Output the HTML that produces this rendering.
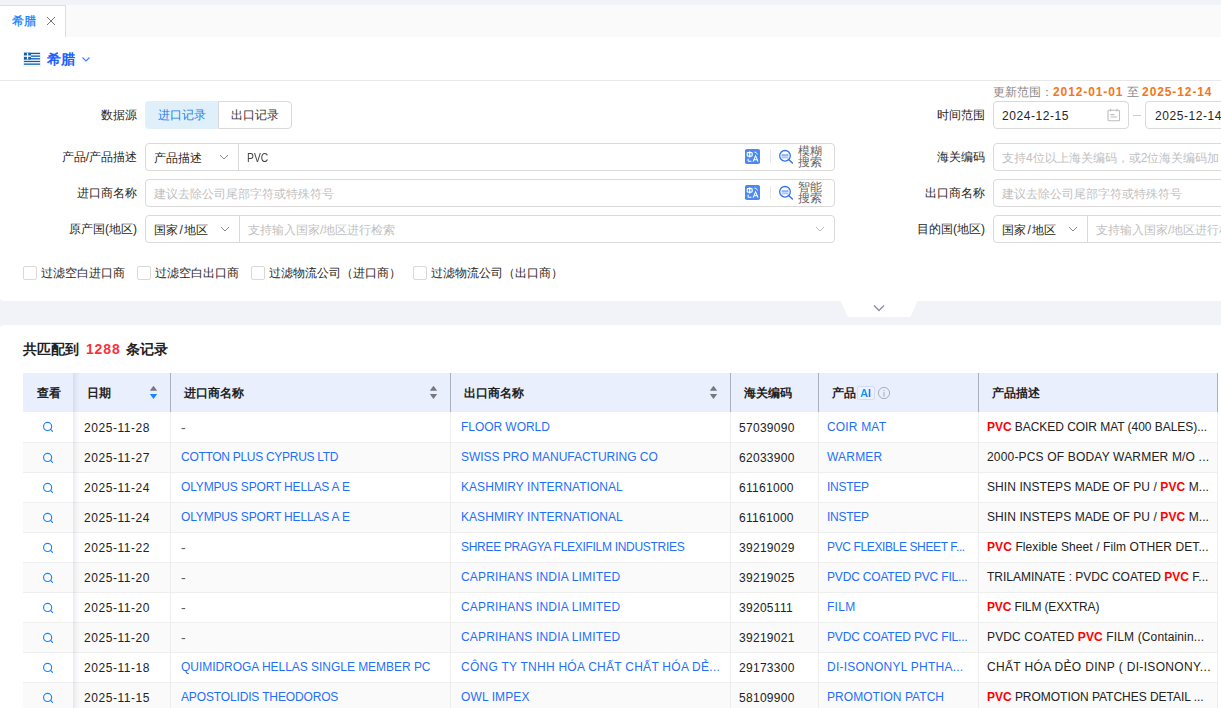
<!DOCTYPE html>
<html><head><meta charset="utf-8">
<style>
*{box-sizing:border-box;margin:0;padding:0}
html,body{width:1221px;height:708px;overflow:hidden;background:#f1f3f8;font-family:"Liberation Sans",sans-serif;font-size:12px;color:#333}
.a{position:absolute;white-space:nowrap}
#tabbar{position:absolute;left:0;top:5px;width:1221px;height:32px;background:#fafafa}
#tab{position:absolute;left:0;top:0;width:66px;height:32px;background:#fff;border-top:1px solid #dedede;border-right:1px solid #dedede}
#formcard{position:absolute;left:0;top:37px;width:1221px;height:264px;background:#fff;border-radius:0 0 0 4px}
.lbl{position:absolute;text-align:right;font-size:12px;color:#262626;line-height:28px;height:28px;white-space:nowrap}
.inp{position:absolute;border:1px solid #d9d9d9;border-radius:4px;height:28px;background:#fff;overflow:hidden}
.ph{position:absolute;top:1px;line-height:26px;color:#bfbfbf;white-space:nowrap}
.tx{position:absolute;top:1px;line-height:26px;color:#262626;white-space:nowrap}
.sep{position:absolute;top:0;width:1px;height:26px;background:#d9d9d9}
.chev{position:absolute}
.cb{position:absolute;top:266px;width:14px;height:14px;border:1px solid #d9d9d9;border-radius:2px;background:#fff}
.cbt{position:absolute;top:266px;line-height:15px;color:#262626;white-space:nowrap}
#band{position:absolute;left:0;top:301px;width:1221px;height:24px;background:#f1f3f8}
#result{position:absolute;left:0;top:325px;width:1221px;height:383px;background:#fff;border-radius:4px 0 0 0}
table{position:absolute;left:23px;top:373px;border-collapse:collapse;table-layout:fixed;width:1194px}
th{height:39px;background:#e9effd;text-align:left;font-weight:bold;color:#222;font-size:12px;position:relative;padding:2px 0 0 14px;white-space:nowrap}
td{height:30px;border-bottom:1px solid #efefef;padding:2px 0 0 11px;white-space:nowrap;overflow:hidden;color:#222;position:relative}
td.c0{text-align:center;padding:3px 0 0 0}
tr.even td{background:#fafafa}
th.c0{text-align:center;padding:2px 0 0 2px}
.rh{position:absolute;right:0;top:0;width:1px;height:39px;background:#b8b8c0}
td .bl{position:absolute;right:0;top:0;width:1px;height:30px;background:#ececec}
.lk{color:#1f6ffa;position:relative;top:-1px}
td.c4,td.c5,td.c6{padding-left:9px}
.dt{letter-spacing:0.55px}
.cd{letter-spacing:0.29px}
.ds{position:relative;top:-1px}
.vl{position:absolute;width:1px}
.dash{color:#555;display:inline-block;transform:scaleX(1.2);transform-origin:0 0}
.r{color:#f00;font-weight:bold}
.sort{position:absolute;top:12px}
.shadow{position:absolute;left:73px;top:373px;width:7px;height:335px;background:linear-gradient(to right,rgba(30,30,90,0.09),rgba(30,30,90,0.035) 45%,rgba(30,30,90,0))}
</style></head><body>
<div id="tabbar"><div id="tab"></div>
 <div class="a" style="left:12px;top:8px;font-size:12px;color:#0f7bff;line-height:16px;-webkit-text-stroke:0.2px #0f7bff">希腊</div>
 <svg class="a" style="left:46px;top:11px" width="10" height="10" viewBox="0 0 10 10"><path d="M1 1L9 9M9 1L1 9" stroke="#707070" stroke-width="0.95"/></svg>
</div>
<div id="formcard">
 <div class="a" style="left:0;top:43px;width:1221px;height:1px;background:#e8e8e8"></div>
 <!-- flag -->
 <svg class="a" style="left:23px;top:15px" width="18" height="15" viewBox="0 0 18 15">
  <rect x="0.5" y="0.5" width="17" height="14" fill="#fff" stroke="#f0f0f0" stroke-width="1"/>
  <g transform="translate(1,0.8)">
  <rect x="0" y="0" width="16" height="1.33" fill="#0d5eaf"/>
  <rect x="0" y="2.67" width="16" height="1.33" fill="#0d5eaf"/>
  <rect x="0" y="5.33" width="16" height="1.33" fill="#0d5eaf"/>
  <rect x="0" y="8" width="16" height="1.33" fill="#0d5eaf"/>
  <rect x="0" y="10.67" width="16" height="1.33" fill="#0d5eaf"/>
  <rect x="0" y="0" width="7" height="6.67" fill="#0d5eaf"/>
  <rect x="2.9" y="0" width="1.3" height="6.67" fill="#fff"/>
  <rect x="0" y="2.67" width="7" height="1.33" fill="#fff"/>
  </g>
 </svg>
 <div class="a" style="left:47px;top:13px;font-size:14px;font-weight:bold;color:#1f5fff;line-height:18px">希腊</div>
 <svg class="a" style="left:81px;top:19px" width="10" height="7" viewBox="0 0 10 7"><path d="M1.5 1.5L5 5L8.5 1.5" fill="none" stroke="#3d7bff" stroke-width="1.1"/></svg>
</div>
<!-- form fields (page coords) -->
<div class="lbl" style="left:0;width:137px;top:101px">数据源</div>
<div class="a" style="left:145px;top:101px;width:73px;height:28px;background:#dff0fb;border-radius:4px 0 0 4px;color:#1f7cf0;text-align:center;line-height:28px">进口记录</div>
<div class="a" style="left:218px;top:101px;width:74px;height:28px;border:1px solid #d9d9d9;border-radius:0 4px 4px 0;background:#fff;text-align:center;line-height:26px;color:#333">出口记录</div>
<div class="lbl" style="left:0;width:137px;top:143px">产品/产品描述</div>
<div class="inp" style="left:145px;top:143px;width:690px">
 <div class="tx" style="left:8px">产品描述</div>
 <svg class="chev" style="left:73px;top:10px" width="10" height="6" viewBox="0 0 10 6"><path d="M1 1L5 5L9 1" fill="none" stroke="#8a8a8a" stroke-width="1"/></svg>
 <div class="sep" style="left:92px"></div>
 <div class="tx" style="left:101px;color:#444;transform:scaleX(0.86);transform-origin:0 0">PVC</div>
 <svg class="a" style="left:599px;top:5px" width="15" height="15" viewBox="0 0 15 15"><rect width="15" height="15" rx="1.8" fill="#4d8af0"/><g fill="none" stroke="#fff" stroke-width="1.1"><rect x="2.2" y="3.6" width="5" height="3.5" rx="0.8"/><path d="M4.7 2.3V8.5"/><path d="M9.4 3.1L11.1 3.4L12.5 5.5" stroke-width="0.9"/><path d="M3.1 9.7V11.4Q3.1 12.3 4 12.3H6.4"/><path d="M8.1 12.6L10.6 6.8L13.1 12.6M9 10.7H12.2"/></g></svg>
 <div class="sep" style="left:624px;top:6px;height:13px;background:#e6e6e6"></div>
 <svg class="a" style="left:632px;top:5px" width="16" height="16" viewBox="0 0 16 16"><path d="M3.6 5.3H9.2L10.4 4.2V7.6H3.6Z M3.6 8.2H10.4V9.8L9.2 9.2H3.6Z" fill="#8db1f3"/><circle cx="7" cy="6.8" r="5.3" fill="none" stroke="#2f74f0" stroke-width="1.3"/><path d="M10.9 10.7L14.4 14" stroke="#2f74f0" stroke-width="1.4" stroke-linecap="round"/></svg>
 <div class="a" style="left:652px;top:2px;font-size:12px;line-height:11px;color:#666">模糊<br>搜索</div>
</div>
<div class="lbl" style="left:0;width:137px;top:179px">进口商名称</div>
<div class="inp" style="left:145px;top:179px;width:690px">
 <div class="ph" style="left:8px">建议去除公司尾部字符或特殊符号</div>
 <svg class="a" style="left:599px;top:5px" width="15" height="15" viewBox="0 0 15 15"><rect width="15" height="15" rx="1.8" fill="#4d8af0"/><g fill="none" stroke="#fff" stroke-width="1.1"><rect x="2.2" y="3.6" width="5" height="3.5" rx="0.8"/><path d="M4.7 2.3V8.5"/><path d="M9.4 3.1L11.1 3.4L12.5 5.5" stroke-width="0.9"/><path d="M3.1 9.7V11.4Q3.1 12.3 4 12.3H6.4"/><path d="M8.1 12.6L10.6 6.8L13.1 12.6M9 10.7H12.2"/></g></svg>
 <div class="sep" style="left:624px;top:6px;height:13px;background:#e6e6e6"></div>
 <svg class="a" style="left:632px;top:5px" width="16" height="16" viewBox="0 0 16 16"><path d="M3.6 5.3H9.2L10.4 4.2V7.6H3.6Z M3.6 8.2H10.4V9.8L9.2 9.2H3.6Z" fill="#8db1f3"/><circle cx="7" cy="6.8" r="5.3" fill="none" stroke="#2f74f0" stroke-width="1.3"/><path d="M10.9 10.7L14.4 14" stroke="#2f74f0" stroke-width="1.4" stroke-linecap="round"/></svg>
 <div class="a" style="left:652px;top:2px;font-size:12px;line-height:11px;color:#666">智能<br>搜索</div>
</div>
<div class="lbl" style="left:0;width:137px;top:215px">原产国(地区)</div>
<div class="inp" style="left:145px;top:215px;width:690px">
 <div class="tx" style="left:8px">国家<span style="margin:0 1px 0 1.5px">/</span>地区</div>
 <svg class="chev" style="left:74px;top:10px" width="10" height="6" viewBox="0 0 10 6"><path d="M1 1L5 5L9 1" fill="none" stroke="#8a8a8a" stroke-width="1"/></svg>
 <div class="sep" style="left:93px"></div>
 <div class="ph" style="left:102px">支持输入国家/地区进行检索</div>
 <svg class="chev" style="left:669px;top:10px" width="10" height="6" viewBox="0 0 10 6"><path d="M1 1L5 5L9 1" fill="none" stroke="#bbb" stroke-width="1"/></svg>
</div>

<div class="a" style="left:993px;top:84px;line-height:16px;color:#888">更新范围：<b style="color:#f5761a;letter-spacing:0.9px">2012-01-01</b> 至 <b style="color:#f5761a;letter-spacing:0.9px">2025-12-14</b></div>
<div class="lbl" style="left:860px;width:125px;top:101px">时间范围</div>
<div class="inp" style="left:993px;top:101px;width:136px">
 <div class="tx" style="left:8px;letter-spacing:0.55px">2024-12-15</div>
 <svg class="a" style="left:113px;top:6px" width="14" height="14" viewBox="0 0 14 14"><g fill="none" stroke="#bdbdbd" stroke-width="1.1"><rect x="1" y="2.3" width="11.5" height="10.4" rx="1"/><path d="M3.6 0.8V3.6M9.9 0.8V3.6M3.5 6.6H7.4M3.5 9H10"/></g></svg>
</div>
<div class="a" style="left:1133px;top:115px;width:8px;height:1px;background:#ccc"></div>
<div class="inp" style="left:1145px;top:101px;width:120px">
 <div class="tx" style="left:9px;letter-spacing:0.55px">2025-12-14</div>
</div>
<div class="lbl" style="left:860px;width:125px;top:143px">海关编码</div>
<div class="inp" style="left:993px;top:143px;width:260px">
 <div class="ph" style="left:8px">支持4位以上海关编码，或2位海关编码加</div>
</div>
<div class="lbl" style="left:860px;width:125px;top:179px">出口商名称</div>
<div class="inp" style="left:993px;top:179px;width:260px">
 <div class="ph" style="left:8px">建议去除公司尾部字符或特殊符号</div>
</div>
<div class="lbl" style="left:860px;width:125px;top:215px">目的国(地区)</div>
<div class="inp" style="left:993px;top:215px;width:260px">
 <div class="tx" style="left:8px">国家<span style="margin:0 1px 0 1.5px">/</span>地区</div>
 <svg class="chev" style="left:74px;top:10px" width="10" height="6" viewBox="0 0 10 6"><path d="M1 1L5 5L9 1" fill="none" stroke="#8a8a8a" stroke-width="1"/></svg>
 <div class="sep" style="left:93px"></div>
 <div class="ph" style="left:102px">支持输入国家/地区进行检索</div>
</div>

<div class="cb" style="left:23px"></div><div class="cbt" style="left:41px">过滤空白进口商</div>
<div class="cb" style="left:137px"></div><div class="cbt" style="left:155px">过滤空白出口商</div>
<div class="cb" style="left:251px"></div><div class="cbt" style="left:269px">过滤物流公司（进口商）</div>
<div class="cb" style="left:413px"></div><div class="cbt" style="left:431px">过滤物流公司（出口商）</div>

<div id="band"></div>
<svg class="a" style="left:840px;top:300px" width="78" height="18" viewBox="0 0 78 18"><path d="M0 0H78L70.5 17H8Z" fill="#fff"/><path d="M34 5.5L39 10.5L44 5.5" fill="none" stroke="#8c8ca0" stroke-width="1.3"/></svg>

<div id="result"></div>
<div class="a" style="left:23px;top:340px;font-size:14px;font-weight:bold;color:#222;line-height:18px">共匹配到 <span style="color:#f5333f;margin:0 1px 0 3px;letter-spacing:0.9px">1288</span> 条记录</div>

<table>
<colgroup><col style="width:50px"><col style="width:97px"><col style="width:280px"><col style="width:280px"><col style="width:88px"><col style="width:160px"><col style="width:239px"></colgroup>
<thead><tr>
<th class="c0">查看</th>
<th class="c1">日期<svg class="sort" style="left:76px" width="9" height="15" viewBox="0 0 9 15"><path d="M4.5 0.8L8.2 5.8H0.8Z" fill="#77777f"/><path d="M4.5 14L8.2 9H0.8Z" fill="#1a84ff"/></svg></th>
<th class="c2">进口商名称<svg class="sort" style="left:259px" width="9" height="15" viewBox="0 0 9 15"><path d="M4.5 0.8L8.2 5.8H0.8Z" fill="#77777f"/><path d="M4.5 14L8.2 9H0.8Z" fill="#77777f"/></svg></th>
<th class="c3">出口商名称<svg class="sort" style="left:259px" width="9" height="15" viewBox="0 0 9 15"><path d="M4.5 0.8L8.2 5.8H0.8Z" fill="#77777f"/><path d="M4.5 14L8.2 9H0.8Z" fill="#77777f"/></svg></th>
<th class="c4">海关编码</th>
<th class="c5">产品<span style="position:absolute;left:39px;top:13px;width:18px;height:14px;border:1px solid #cfdcff;border-radius:2px;background:#edf2ff"><b style="position:absolute;left:2px;top:0;width:11px;text-align:center;font-size:11px;line-height:12px;letter-spacing:-0.3px;background:linear-gradient(90deg,#12b5e8,#1f66ff);-webkit-background-clip:text;background-clip:text;color:transparent">AI</b></span><svg style="position:absolute;left:60px;top:14px" width="13" height="13" viewBox="0 0 13 13"><circle cx="6" cy="6" r="5.6" fill="none" stroke="#a5a5ad" stroke-width="0.9"/><path d="M6 5.2V9.6M6 3V4.1" stroke="#a5a5ad" stroke-width="1"/></svg></th>
<th class="c6">产品描述</th>
</tr></thead>
<tbody>
<tr class="odd"><td class="c0"><svg style="position:absolute;left:19px;top:9px" width="12" height="12" viewBox="0 0 12 12"><circle cx="5.6" cy="5.4" r="4.05" fill="none" stroke="#1a82ff" stroke-width="1.15"/><path d="M8.6 8.4L10.5 10.3" stroke="#1a82ff" stroke-width="1.2" stroke-linecap="round"/></svg></td><td class="c1"><span class="dt">2025-11-28</span></td><td class="c2"><span class="dash">-</span></td><td class="c3"><span class="lk" style="letter-spacing:-0.05px">FLOOR WORLD</span></td><td class="c4"><span class="cd">57039090</span></td><td class="c5"><span class="lk" style="letter-spacing:0.171px">COIR MAT</span></td><td class="c6"><span class="ds" style="letter-spacing:-0.048px"><b class="r">PVC</b> BACKED COIR MAT (400 BALES)...</span></td></tr>
<tr class="even"><td class="c0"><svg style="position:absolute;left:19px;top:9px" width="12" height="12" viewBox="0 0 12 12"><circle cx="5.6" cy="5.4" r="4.05" fill="none" stroke="#1a82ff" stroke-width="1.15"/><path d="M8.6 8.4L10.5 10.3" stroke="#1a82ff" stroke-width="1.2" stroke-linecap="round"/></svg></td><td class="c1"><span class="dt">2025-11-27</span></td><td class="c2"><span class="lk" style="letter-spacing:-0.29px">COTTON PLUS CYPRUS LTD</span></td><td class="c3"><span class="lk" style="letter-spacing:-0.024px">SWISS PRO MANUFACTURING CO</span></td><td class="c4"><span class="cd">62033900</span></td><td class="c5"><span class="lk" style="letter-spacing:0.2px">WARMER</span></td><td class="c6"><span class="ds" style="letter-spacing:0.177px">2000-PCS OF BODAY WARMER M/O ...</span></td></tr>
<tr class="odd"><td class="c0"><svg style="position:absolute;left:19px;top:9px" width="12" height="12" viewBox="0 0 12 12"><circle cx="5.6" cy="5.4" r="4.05" fill="none" stroke="#1a82ff" stroke-width="1.15"/><path d="M8.6 8.4L10.5 10.3" stroke="#1a82ff" stroke-width="1.2" stroke-linecap="round"/></svg></td><td class="c1"><span class="dt">2025-11-24</span></td><td class="c2"><span class="lk" style="letter-spacing:-0.165px">OLYMPUS SPORT HELLAS A E</span></td><td class="c3"><span class="lk" style="letter-spacing:0.052px">KASHMIRY INTERNATIONAL</span></td><td class="c4"><span class="cd">61161000</span></td><td class="c5"><span class="lk" style="letter-spacing:-0.28px">INSTEP</span></td><td class="c6"><span class="ds" style="letter-spacing:0.076px">SHIN INSTEPS MADE OF PU / <b class="r">PVC</b> M...</span></td></tr>
<tr class="even"><td class="c0"><svg style="position:absolute;left:19px;top:9px" width="12" height="12" viewBox="0 0 12 12"><circle cx="5.6" cy="5.4" r="4.05" fill="none" stroke="#1a82ff" stroke-width="1.15"/><path d="M8.6 8.4L10.5 10.3" stroke="#1a82ff" stroke-width="1.2" stroke-linecap="round"/></svg></td><td class="c1"><span class="dt">2025-11-24</span></td><td class="c2"><span class="lk" style="letter-spacing:-0.165px">OLYMPUS SPORT HELLAS A E</span></td><td class="c3"><span class="lk" style="letter-spacing:0.052px">KASHMIRY INTERNATIONAL</span></td><td class="c4"><span class="cd">61161000</span></td><td class="c5"><span class="lk" style="letter-spacing:-0.28px">INSTEP</span></td><td class="c6"><span class="ds" style="letter-spacing:0.076px">SHIN INSTEPS MADE OF PU / <b class="r">PVC</b> M...</span></td></tr>
<tr class="odd"><td class="c0"><svg style="position:absolute;left:19px;top:9px" width="12" height="12" viewBox="0 0 12 12"><circle cx="5.6" cy="5.4" r="4.05" fill="none" stroke="#1a82ff" stroke-width="1.15"/><path d="M8.6 8.4L10.5 10.3" stroke="#1a82ff" stroke-width="1.2" stroke-linecap="round"/></svg></td><td class="c1"><span class="dt">2025-11-22</span></td><td class="c2"><span class="dash">-</span></td><td class="c3"><span class="lk" style="letter-spacing:-0.297px">SHREE PRAGYA FLEXIFILM INDUSTRIES</span></td><td class="c4"><span class="cd">39219029</span></td><td class="c5"><span class="lk" style="letter-spacing:-0.377px">PVC FLEXIBLE SHEET F...</span></td><td class="c6"><span class="ds" style="letter-spacing:0.095px"><b class="r">PVC</b> Flexible Sheet / Film OTHER DET...</span></td></tr>
<tr class="even"><td class="c0"><svg style="position:absolute;left:19px;top:9px" width="12" height="12" viewBox="0 0 12 12"><circle cx="5.6" cy="5.4" r="4.05" fill="none" stroke="#1a82ff" stroke-width="1.15"/><path d="M8.6 8.4L10.5 10.3" stroke="#1a82ff" stroke-width="1.2" stroke-linecap="round"/></svg></td><td class="c1"><span class="dt">2025-11-20</span></td><td class="c2"><span class="dash">-</span></td><td class="c3"><span class="lk" style="letter-spacing:0.168px">CAPRIHANS INDIA LIMITED</span></td><td class="c4"><span class="cd">39219025</span></td><td class="c5"><span class="lk" style="letter-spacing:-0.181px">PVDC COATED PVC FIL...</span></td><td class="c6"><span class="ds" style="letter-spacing:-0.009px">TRILAMINATE : PVDC COATED <b class="r">PVC</b> F...</span></td></tr>
<tr class="odd"><td class="c0"><svg style="position:absolute;left:19px;top:9px" width="12" height="12" viewBox="0 0 12 12"><circle cx="5.6" cy="5.4" r="4.05" fill="none" stroke="#1a82ff" stroke-width="1.15"/><path d="M8.6 8.4L10.5 10.3" stroke="#1a82ff" stroke-width="1.2" stroke-linecap="round"/></svg></td><td class="c1"><span class="dt">2025-11-20</span></td><td class="c2"><span class="dash">-</span></td><td class="c3"><span class="lk" style="letter-spacing:0.168px">CAPRIHANS INDIA LIMITED</span></td><td class="c4"><span class="cd">39205111</span></td><td class="c5"><span class="lk" style="letter-spacing:0.267px">FILM</span></td><td class="c6"><span class="ds" style="letter-spacing:-0.138px"><b class="r">PVC</b> FILM (EXXTRA)</span></td></tr>
<tr class="even"><td class="c0"><svg style="position:absolute;left:19px;top:9px" width="12" height="12" viewBox="0 0 12 12"><circle cx="5.6" cy="5.4" r="4.05" fill="none" stroke="#1a82ff" stroke-width="1.15"/><path d="M8.6 8.4L10.5 10.3" stroke="#1a82ff" stroke-width="1.2" stroke-linecap="round"/></svg></td><td class="c1"><span class="dt">2025-11-20</span></td><td class="c2"><span class="dash">-</span></td><td class="c3"><span class="lk" style="letter-spacing:0.168px">CAPRIHANS INDIA LIMITED</span></td><td class="c4"><span class="cd">39219021</span></td><td class="c5"><span class="lk" style="letter-spacing:-0.181px">PVDC COATED PVC FIL...</span></td><td class="c6"><span class="ds" style="letter-spacing:0.136px">PVDC COATED <b class="r">PVC</b> FILM (Containin...</span></td></tr>
<tr class="odd"><td class="c0"><svg style="position:absolute;left:19px;top:9px" width="12" height="12" viewBox="0 0 12 12"><circle cx="5.6" cy="5.4" r="4.05" fill="none" stroke="#1a82ff" stroke-width="1.15"/><path d="M8.6 8.4L10.5 10.3" stroke="#1a82ff" stroke-width="1.2" stroke-linecap="round"/></svg></td><td class="c1"><span class="dt">2025-11-18</span></td><td class="c2"><span class="lk" style="letter-spacing:-0.036px">QUIMIDROGA HELLAS SINGLE MEMBER PC</span></td><td class="c3"><span class="lk" style="letter-spacing:0.263px">CÔNG TY TNHH HÓA CHẤT CHẤT HÓA DẺ...</span></td><td class="c4"><span class="cd">29173300</span></td><td class="c5"><span class="lk" style="letter-spacing:0.242px">DI-ISONONYL PHTHA...</span></td><td class="c6"><span class="ds" style="letter-spacing:0.337px">CHẤT HÓA DẺO DINP ( DI-ISONONY...</span></td></tr>
<tr class="even"><td class="c0"><svg style="position:absolute;left:19px;top:9px" width="12" height="12" viewBox="0 0 12 12"><circle cx="5.6" cy="5.4" r="4.05" fill="none" stroke="#1a82ff" stroke-width="1.15"/><path d="M8.6 8.4L10.5 10.3" stroke="#1a82ff" stroke-width="1.2" stroke-linecap="round"/></svg></td><td class="c1"><span class="dt">2025-11-15</span></td><td class="c2"><span class="lk" style="letter-spacing:-0.145px">APOSTOLIDIS THEODOROS</span></td><td class="c3"><span class="lk" style="letter-spacing:0.112px">OWL IMPEX</span></td><td class="c4"><span class="cd">58109900</span></td><td class="c5"><span class="lk" style="letter-spacing:0.057px">PROMOTION PATCH</span></td><td class="c6"><span class="ds" style="letter-spacing:-0.029px"><b class="r">PVC</b> PROMOTION PATCHES DETAIL ...</span></td></tr>
</tbody>
</table>
<div class="shadow"></div>
<div class="vl" style="left:170px;top:373px;height:39px;background:#acafbd"></div><div class="vl" style="left:170px;top:412px;height:296px;background:#ededed"></div><div class="vl" style="left:450px;top:373px;height:39px;background:#acafbd"></div><div class="vl" style="left:450px;top:412px;height:296px;background:#ededed"></div><div class="vl" style="left:730px;top:373px;height:39px;background:#acafbd"></div><div class="vl" style="left:730px;top:412px;height:296px;background:#ededed"></div><div class="vl" style="left:818px;top:373px;height:39px;background:#acafbd"></div><div class="vl" style="left:818px;top:412px;height:296px;background:#ededed"></div><div class="vl" style="left:978px;top:373px;height:39px;background:#acafbd"></div><div class="vl" style="left:978px;top:412px;height:296px;background:#ededed"></div><div class="vl" style="left:1217px;top:373px;height:39px;background:#acafbd"></div><div class="vl" style="left:1217px;top:412px;height:296px;background:#ededed"></div>
</body></html>
